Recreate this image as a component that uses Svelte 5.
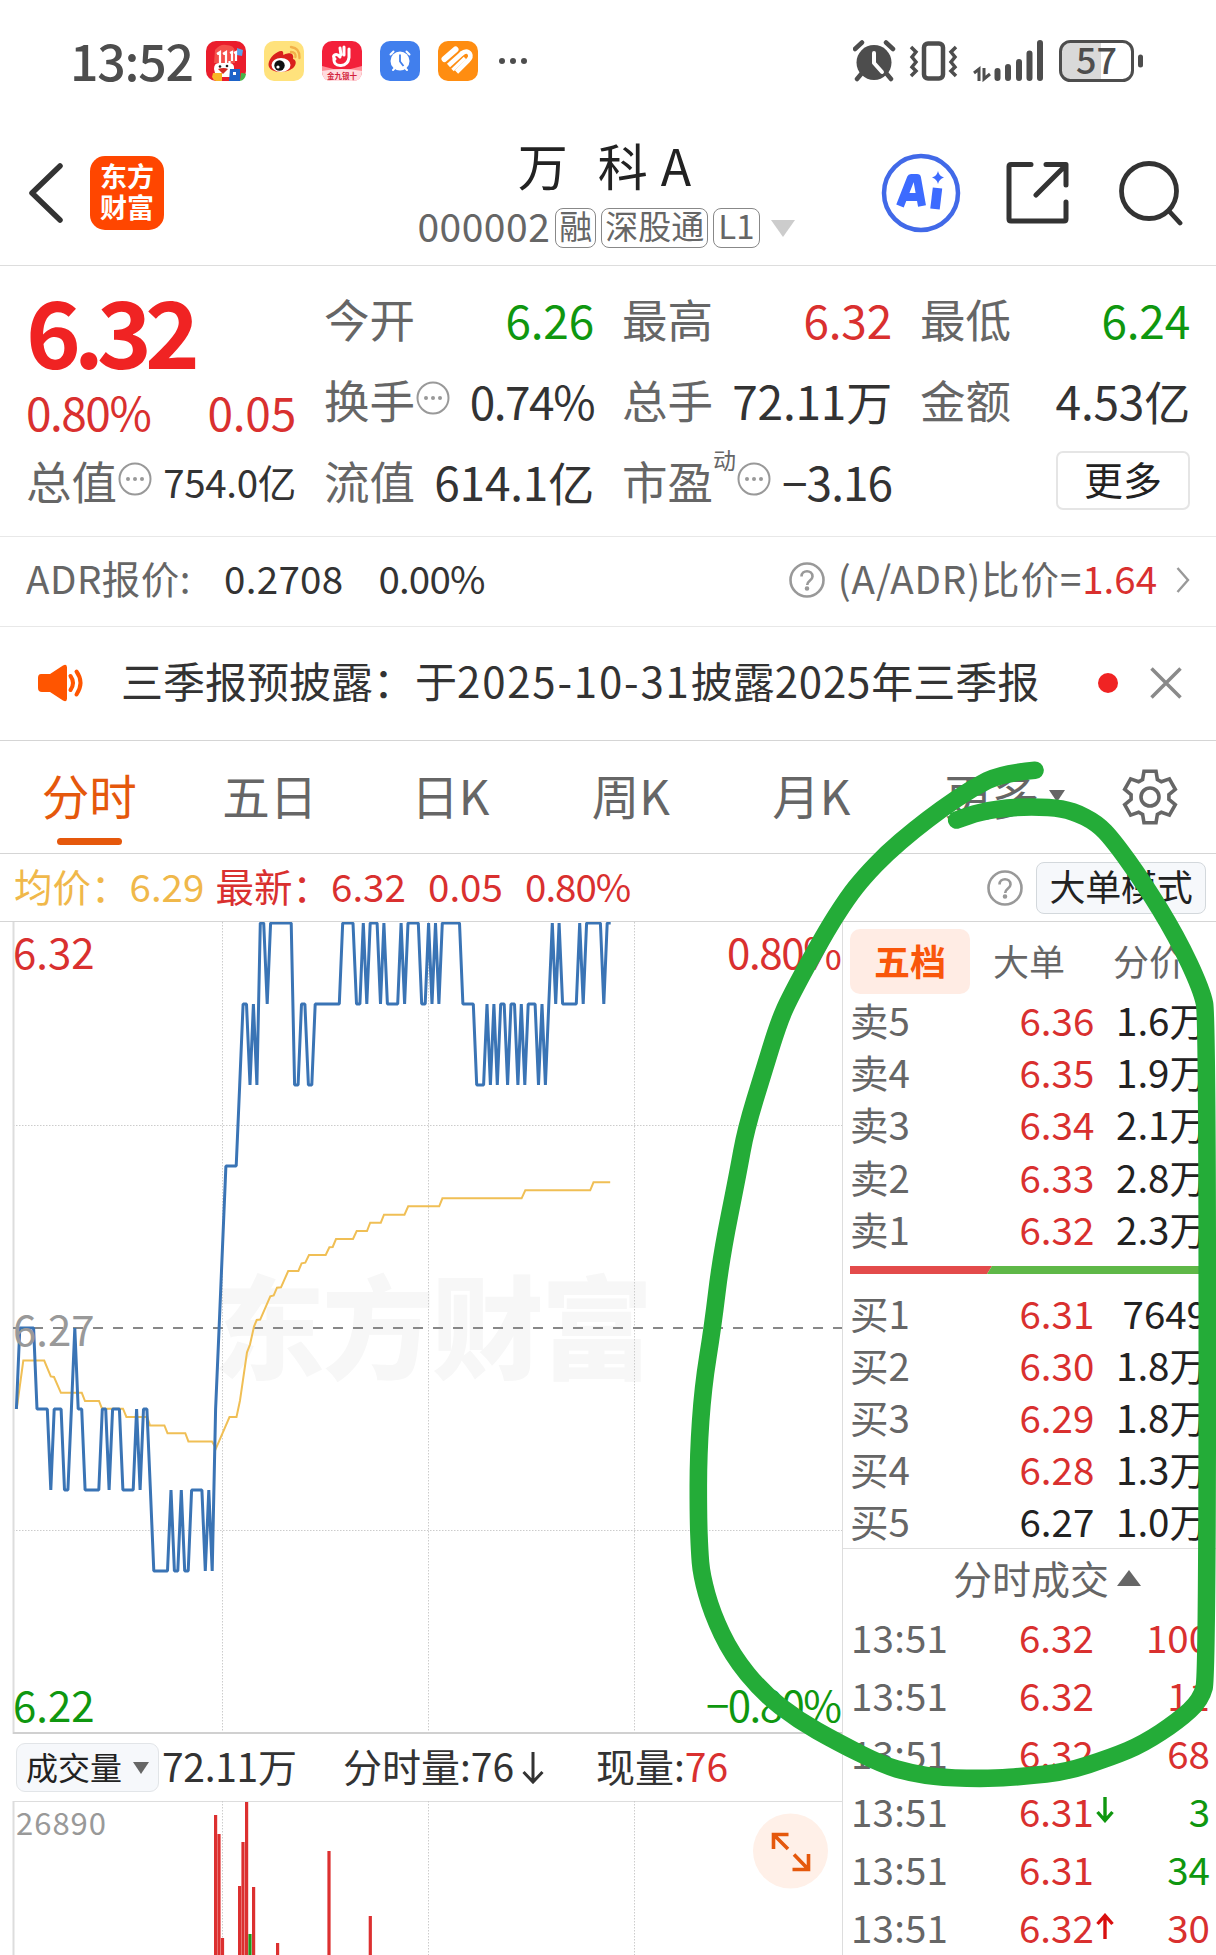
<script>
  const apps = ['sale', 'weibo', 'hand', 'clock', 'health'];
  const tabs = ['分时', '五日', '日K', '周K', '月K', '更多'];

  const sells = [
    ['卖5', '6.36', '1.6万'],
    ['卖4', '6.35', '1.9万'],
    ['卖3', '6.34', '2.1万'],
    ['卖2', '6.33', '2.8万'],
    ['卖1', '6.32', '2.3万']
  ];
  const buys = [
    ['买1', '6.31', '7649'],
    ['买2', '6.30', '1.8万'],
    ['买3', '6.29', '1.8万'],
    ['买4', '6.28', '1.3万'],
    ['买5', '6.27', '1.0万']
  ];
  const trades = [
    { price: '6.32', qty: '100', side: 'red' },
    { price: '6.32', qty: '11', side: 'red' },
    { price: '6.32', qty: '68', side: 'red' },
    { price: '6.31', qty: '3', side: 'green', move: 'down' },
    { price: '6.31', qty: '34', side: 'green' },
    { price: '6.32', qty: '30', side: 'red', move: 'up' }
  ];

  // Minute prices as [cents above 6.00, number of minutes]
  const runs = [
    [26,1],[27,5],[26,4],[25,1],[26,3],[25,2],[26,1],[27,1],[26,2],[25,5],[26,2],[25,1],[26,3],[25,4],
    [26,1],[25,1],[26,2],[25,1],[24,5],[25,1],[24,2],[25,1],[24,2],[25,4],[24,1],[25,1],[24,1],[26,1],[27,1],[28,1],
    [29,4],[30,1],[31,2],[30,1],[31,1],[30,1],[32,2],[31,1],[32,7],[30,2],[31,2],[30,2],[31,8],[32,4],
    [31,2],[32,1],[31,1],[32,3],[31,1],[32,1],[31,4],[32,1],[31,1],[32,4],[31,2],[32,1],[31,1],[32,1],[31,1],
    [32,6],[31,4],[30,3],[31,1],[30,1],[31,1],[30,1],[31,2],[30,1],[31,2],[30,1],[31,1],[30,1],[31,3],[30,1],
    [31,1],[30,1],[31,1],[32,1],[31,1],[32,1],[31,5],[32,1],[31,1],[32,5],[31,1],[32,2]
  ];
  const pricePoints = runs
    .flatMap(([p, n]) => Array(n).fill(p))
    .map((p, i) => `${(16.4 + i * 3.435).toFixed(1)},${1 + (32 - p) * 81}`)
    .join(' ');

  const average =
    '16.7,487 23.3,438.5 44.2,438.5 50.8,454.4 54,455 60.9,470.8 81.8,470.8 85,479 99,479 102,486.7 123,486.7 126.4,495 147.3,495 150,503.5 164.4,503.5 167.5,511.2 185.3,511.2 188.4,519.4 212,519.4 216,526.3 229.5,495 236.5,495 240,478.5 247,430.3 250,422.5 254,404.5 256.7,398 260.2,397.6 270.3,374.4 273.7,373.5 277,365.7 281,365.3 288.2,349 298.4,349 301.6,341.3 305.3,340.7 309,333 325.7,333 329.4,325.3 332.7,325 336,317 353,317 356.7,309 367,309 370.2,300.7 380.8,300.7 384,292.7 404.5,292.7 408.2,284.3 439.2,284.3 442.4,276.3 521.6,276.3 525.3,268.3 590.2,268.3 593.5,260.3 610.2,260.3';

  const bars = [
    [215.6,14],[219,33],[222.5,137],[239.6,85],[243,41],[246.6,1],[250,133,1],[253.6,86],[277.6,142],[329,50],[370.3,115]
  ];

  const stroke = [
    [1035,770.3],[1001.7,773.3],[972.5,788],[941.5,809],[914,830],[887,853],[864,877],[848,897],[825,933],[790,997],
    [778.6,1023],[764,1070],[745.7,1130],[738,1173],[721,1258],[712.7,1327],[703,1387],[698.3,1455],[698.3,1517],
    [699.5,1550],[701.5,1575],[712,1613],[732,1655],[763,1693],[798,1720],[837,1742],[883,1765],[910.5,1773],
    [941.5,1777.7],[992,1778.7],[1027,1776],[1065.5,1772],[1112,1757],[1143,1744],[1178,1721],[1201,1700],[1207.3,1675],
    [1207.3,1017],[1201.7,990],[1176.7,936.7],[1143,881.7],[1113,840],[1096.7,823],[1073,811],[1050,807],[1013,807],
    [980,811.7],[956.7,820]
  ];
  // Quadratic curves through the midpoints of neighbouring samples
  const marker = stroke
    .map(([x, y], i) => {
      if (i === 0) return `M${x} ${y}`;
      if (i === stroke.length - 1) return `L${x} ${y}`;
      const [nx, ny] = stroke[i + 1];
      return `Q${x} ${y} ${(x + nx) / 2} ${(y + ny) / 2}`;
    })
    .join('');

  const polar = (r, deg) => {
    const a = (deg * Math.PI) / 180;
    return `${(30 + r * Math.cos(a)).toFixed(1)},${(30 + r * Math.sin(a)).toFixed(1)}`;
  };
  const gear = [0, 1, 2, 3, 4, 5]
    .map((k) => {
      const c = k * 60 - 90;
      return [polar(19, c - 23), polar(26.5, c - 13), polar(26.5, c + 13), polar(19, c + 23)].join(' ');
    })
    .join(' ');
</script>

{#snippet more()}
  <svg class="dots" viewBox="0 0 34 34"><circle cx="17" cy="17" r="15.5" fill="none" stroke="#999" stroke-width="2" /><g fill="#999"><circle cx="10" cy="17" r="2" /><circle cx="17" cy="17" r="2" /><circle cx="24" cy="17" r="2" /></g></svg>
{/snippet}

{#snippet help()}
  <svg class="help" viewBox="0 0 36 36" fill="none" stroke="#999" stroke-width="2.6"><circle cx="18" cy="18" r="16.5" /><path d="M12.5 14.5c0-7 11-7 11 0 0 4-5.300 4-5.300 8.500" /><circle cx="18" cy="26.500" r="1" fill="#999" /></svg>
{/snippet}

{#snippet level(row)}
  <div class="level">
    <span class="grey">{row[0]}</span>
    <span class:red={row[1] !== '6.27'} class="price">{row[1]}</span>
    <span class="qty">{row[2]}</span>
  </div>
{/snippet}

<div class="screen">
  <div class="status">
    <span class="time">13:52</span>
    <div class="apps">
      {#each apps as app}
        <svg class="app" viewBox="0 0 40 40">
          {#if app === 'sale'}
            <rect width="40" height="40" rx="10" fill="#ea1d2c" />
            <path d="M31 7l6 2-1 6-5-1z" fill="#5ba0e8" />
            <path d="M9 9q5-6 11-5 8 0 9 6v12H8z" fill="#f4504b" />
            <path d="M11 13l3-2v11M17 13l3-2v11M23.500 20v2M24 12l2-1v9M28 12l2-1v9" stroke="#fff" stroke-width="2.200" fill="none" />
            <path d="M8 28q0-6 5-6h11q5 1 4 7l-3 7H10z" fill="#fff" />
            <circle cx="14" cy="25.500" r="1.300" fill="#222" /><circle cx="21" cy="25" r="1.300" fill="#222" />
            <path d="M12 28q6-2 10 0l-5 5z" fill="#d32b24" />
            <path d="M7 32h9v8h-6q-3-1-4-4z" fill="#f8b526" />
            <path d="M24 28h10v12H23z" fill="#1d63c8" /><path d="M27 31h3v3h-3z" fill="#fff" />
            <path d="M35 32q4 0 5 1-1 6-6 7z" fill="#45b649" />
          {:else if app === 'weibo'}
            <rect width="40" height="40" rx="10" fill="#ffe27c" />
            <path d="M4.500 23C5 16 14 9 18 10c2 1 1 4 1 4s7-3 9-1 1 5 1 5c4 1 3 6 1 8-6 7-26 7-25.500-3z" fill="#d9201c" />
            <ellipse cx="17" cy="24" rx="9.500" ry="7" fill="#fff" /><circle cx="15.500" cy="24.500" r="5.200" fill="#111" /><circle cx="14" cy="26" r="1.600" fill="#fff" />
            <path d="M27 6q9 1 8.500 11M27 11q5 0 4.500 5" fill="none" stroke="#f2b04a" stroke-width="2.400" stroke-linecap="round" />
          {:else if app === 'hand'}
            <rect width="40" height="40" rx="10" fill="#f3203a" />
            <path d="M0 25Q20 32 40 25v5q0 10-10 10H10Q0 40 0 30z" fill="#ff8d96" />
            <path d="M0 30Q20 26 40 30q0 10-10 10H10Q0 40 0 30z" fill="#ffdcdf" />
            <path d="M18 16c-4-5-9-1-5 2M12 16q-1 9 7 8.500 7-.5 8-8V8M18 7l1 7M22 6v8" fill="none" stroke="#fff" stroke-width="3" stroke-linecap="round" />
            <text x="20" y="38" font-size="7.500" font-weight="700" text-anchor="middle" fill="#d21f3c">金九银十</text>
          {:else if app === 'clock'}
            <rect width="40" height="40" rx="10" fill="#417fed" />
            <circle cx="20" cy="20" r="9.500" fill="#fff" /><path d="M10.500 13.500l3-3M29.500 13.500l-3-3M13 29l3-3M27 29l-3-3" stroke="#fff" stroke-width="2" stroke-linecap="round" />
            <path d="M20 13.500v7l3.500 4.500" fill="none" stroke="#417fed" stroke-width="1.800" />
          {:else}
            <rect width="40" height="40" rx="10" fill="#ff8d11" />
            <g fill="none" stroke="#fff" stroke-width="4.600"><path d="M6.500 18L17.500 8.500" stroke-width="6" stroke-linecap="round" /><path d="M10.500 24.500L25 11.500" /><path d="M23 13q6-5 9 0 1.500 3-2 6.500L18.500 31" /></g>
            <path d="M14.500 29L27 17" stroke="#fff" stroke-width="3.600" />
          {/if}
        </svg>
      {/each}
    </div>
    <svg class="ellipsis" viewBox="0 0 30 8" fill="#4d4d4d"><circle cx="4" cy="4" r="3" /><circle cx="15" cy="4" r="3" /><circle cx="26" cy="4" r="3" /></svg>
    <svg class="indicators" viewBox="0 0 292 42" fill="none" stroke="#4d4d4d">
      <circle cx="21" cy="22.500" r="17.500" fill="#4d4d4d" stroke="none" />
      <path d="M2 9l7-6.500M40 9l-7-6.500M4 39l5-6M38 39l-5-6" stroke-width="4.500" stroke-linecap="round" />
      <path d="M21 13v10l8 9" stroke="#fff" stroke-width="4" stroke-linecap="round" stroke-linejoin="round" />
      <rect x="71" y="3.500" width="19" height="35" rx="4" stroke-width="4.500" />
      <path d="M58 7l5 5-4 5 4 5-4 5 4 4-5 5M103 7l-5 5 4 5-4 5 4 5-4 4 5 5" stroke-width="3.500" />
      <path d="M121 33l5-4v12M131 28v11l6-5" stroke-width="3" />
      <path d="M144.500 31v7M155 27v11M166 22v16M176.500 13.500v24.500M187 3v35" stroke-width="6" stroke-linecap="round" />
      <path d="M218 3h30v36h-30q-9 0-9-9v-18q0-9 9-9z" fill="#d9d9d9" stroke="none" />
      <rect x="207.500" y="1.500" width="72" height="39" rx="10" stroke-width="3" />
      <rect x="285" y="14.500" width="5" height="13" rx="2.500" fill="#4d4d4d" stroke="none" />
      <text x="243.500" y="34" font-size="36" font-weight="500" text-anchor="middle" fill="#4d4d4d" stroke="none">57</text>
    </svg>
  </div>

  <header>
    <svg class="back" viewBox="0 0 36 62" fill="none" stroke="#333" stroke-width="5.500" stroke-linecap="round" stroke-linejoin="round"><path d="M32 4L4 31l28 27" /></svg>
    <div class="logo"><span>东方</span><span>财富</span></div>
    <div class="title">
      <div class="name"><span>万</span><span>科</span><span>A</span></div>
      <div class="code">
        <span class="digits">000002</span><span class="tag">融</span><span class="tag">深股通</span><span class="tag">L1</span>
        <svg viewBox="0 0 24 17"><path d="M0 0h24L12 17z" fill="#ccc" /></svg>
      </div>
    </div>
    <div class="actions">
      <svg class="ai" viewBox="0 0 80 80"><circle cx="40" cy="40" r="37" fill="none" stroke="#4169e8" stroke-width="4.500" /><g fill="none" stroke="#3d6bff" stroke-linejoin="round"><path d="M19 53L30 25h6l5 28M25 44h14" stroke-width="8" /><path d="M56.500 35L54 56" stroke-width="9.500" /></g><path d="M57 18q1 5 6 6.500-5 1.500-6 6.500-1-5-6-6.500 5-1.500 6-6.500z" fill="#3d6bff" /></svg>
      <svg class="share" viewBox="0 0 64 64" fill="none" stroke="#333" stroke-width="5" stroke-linecap="round" stroke-linejoin="round"><path d="M25 3.500H5q-2 0-2 2V58q0 2 2 2h53q2 0 2-2V41M40 3.500h20V24M59 5L30 34" /></svg>
      <svg class="search" viewBox="0 0 66 66" fill="none" stroke="#333" stroke-width="4.800" stroke-linecap="round"><circle cx="31" cy="31" r="27.500" /><path d="M51 51l11 12" /></svg>
    </div>
  </header>

  <section class="quote">
    <div class="main-price">
      <div class="big">6.32</div>
      <div class="pair red"><span class="pct">0.80%</span><span>0.05</span></div>
      <div class="pair"><span class="key">总值{@render more()}</span><span class="small">754.0亿</span></div>
    </div>
    <div class="stats">
      <div class="pair"><span class="key">今开</span><span class="green">6.26</span></div>
      <div class="pair"><span class="key">换手{@render more()}</span><span class="pct">0.74%</span></div>
      <div class="pair"><span class="key">流值</span><span>614.1亿</span></div>
    </div>
    <div class="stats">
      <div class="pair"><span class="key">最高</span><span class="red">6.32</span></div>
      <div class="pair"><span class="key">总手</span><span>72.11万</span></div>
      <div class="pair"><span class="key">市盈<i class="sup">动</i>{@render more()}</span><span class="neg">−3.16</span></div>
    </div>
    <div class="stats">
      <div class="pair"><span class="key">最低</span><span class="green">6.24</span></div>
      <div class="pair"><span class="key">金额</span><span>4.53亿</span></div>
      <div class="pair end"><button class="more">更多</button></div>
    </div>
  </section>

  <section class="adr">
    <span class="grey label">ADR报价:</span><span class="v1">0.2708</span><span class="v2">0.00%</span>
    <div class="ratio">{@render help()}<span class="grey formula">(A/ADR)比价=</span><span class="red">1.64</span>
      <svg class="chev" viewBox="0 0 14 28" fill="none" stroke="#999" stroke-width="2.400"><path d="M1.500 2L12 14 1.500 26" /></svg></div>
  </section>

  <section class="notice">
    <svg class="speaker" viewBox="0 0 50 40" fill="none" stroke="#ff5500"><path d="M4 11h9L26 2.500q4-2 4 2v31q0 4-4 2L13 29H5q-4 0-4-4V15q0-4 3-4z" fill="#ff5500" stroke="none" /><path d="M33.500 13q5 7 0 14M39.500 8.500q8 11 0 23" stroke-width="4" stroke-linecap="round" /></svg>
    <span class="msg">三季报预披露：于<b class="date">2025-10-31</b>披露<b>2025</b>年三季报</span>
    <i class="dot"></i>
    <svg class="close" viewBox="0 0 32 32" stroke="#8a8a8a" stroke-width="3.500"><path d="M1.500 1.500l29 29M30.500 1.500l-29 29" /></svg>
  </section>

  <nav>
    {#each tabs as tab, i}
      <span class="tab" class:on={i === 0}>{tab}{#if i === 5}<svg class="tri" viewBox="0 0 16 12"><path d="M0 0h16L8 12z" fill="#666" /></svg>{/if}</span>
    {/each}
    <svg class="gear" viewBox="0 0 60 60" fill="none" stroke="#666" stroke-width="3.600"><polygon points={gear} /><circle cx="30" cy="30" r="9" /></svg>
  </nav>

  <section class="info">
    <span class="avg n0">均价：</span><span class="avg n1">6.29</span>
    <span class="red n2">最新：</span><span class="red n3">6.32</span><span class="red n4">0.05</span><span class="red n5">0.80%</span>
    <div class="mode">{@render help()}<button>大单模式</button></div>
  </section>

  <div class="body">
    <div class="charts">
      <svg class="chart" viewBox="0 0 842 812">
        <text x="213" y="449" font-size="112" font-weight="900" fill="#f7f7f7" textLength="440">东方财富</text>
        <g stroke="#ccc" stroke-width="1" stroke-dasharray="1.500 1.500">
          <path d="M222.500 0V811M428.500 0V811M634.500 0V811M13 203.500H842M13 608.500H842" />
        </g>
        <path d="M13.500 0V812" stroke="#ddd" stroke-width="2" />
        <path d="M13 811H842" stroke="#d0d0d0" stroke-width="2" />
        <path d="M13 406H842" stroke="#888" stroke-width="2" stroke-dasharray="10 10" />
        <polyline points={average} fill="none" stroke="#f0bf55" stroke-width="2" />
        <polyline points={pricePoints} fill="none" stroke="#3a74b5" stroke-width="3" stroke-linejoin="bevel" />
        <g font-size="42">
          <text x="13" y="47" fill="#d9302f">6.32</text>
          <text x="13" y="424" fill="#999">6.27</text>
          <text x="13" y="800" fill="#0f970f">6.22</text>
          <text x="842" y="47" fill="#d9302f" text-anchor="end" textLength="115">0.80%</text>
          <text x="842" y="800" fill="#0f970f" text-anchor="end" textLength="136">−0.80%</text>
        </g>
      </svg>
      <div class="vol-head">
        <button>成交量<svg viewBox="0 0 16 12"><path d="M0 0h16L8 12z" fill="#666" /></svg></button>
        <span class="total">72.11万</span><span class="minute">分时量:76<svg viewBox="0 0 22 32" fill="none" stroke="#333" stroke-width="3"><path d="M11 0v30M1.500 20l9.500 10 9.500-10" /></svg></span><span class="now">现量:<em class="red">76</em></span>
      </div>
      <svg class="volume" viewBox="0 0 842 155">
        <path d="M13 .5H842" stroke="#ddd" /><path d="M13.500 0V155" stroke="#ddd" stroke-width="2" />
        <path d="M222.500 0V155M428.500 0V155M634.500 0V155" stroke="#ccc" stroke-dasharray="1.500 1.500" />
        {#each bars as bar}
          <rect x={bar[0] - 1.6} y={bar[1]} width="3.200" height={155 - bar[1]} fill={bar[2] ? '#1f9a1f' : '#dc3030'} />
        {/each}
        <text x="16" y="34" font-size="31" fill="#999" textLength="90">26890</text>
        <circle cx="790.500" cy="50" r="37.500" fill="#fff0e8" />
        <path d="M773.500 48V33.500h15M774 34l14 14M808.500 53v15.500h-16M808 68L794 53.500" fill="none" stroke="#e5580c" stroke-width="3.600" />
      </svg>
    </div>

    <aside>
      <div class="book-tabs"><span class="on">五档</span><span>大单</span><span>分价</span></div>
      <div class="levels">{#each sells as row}{@render level(row)}{/each}</div>
      <svg class="balance" viewBox="0 0 350 8"><path d="M0 0h142l-5 8H0z" fill="#e34b4b" /><path d="M142 0h208v8H137z" fill="#5fb848" /></svg>
      <div class="levels">{#each buys as row}{@render level(row)}{/each}</div>
      <div class="trade-head">分时成交<svg viewBox="0 0 24 16"><path d="M0 16h24L12 0z" fill="#666" /></svg></div>
      {#each trades as t}
        <div class="trade">
          <span class="grey">13:51</span>
          <span class="price red">{t.price}</span>
          <span class="arrow">
            {#if t.move}
              <svg class:flip={t.move === 'up'} viewBox="0 0 18 26" fill="none" stroke={t.move === 'up' ? '#d90f0f' : '#0f970f'} stroke-width="3.400"><path d="M9 0v23M1.500 15L9 23.500 16.500 15" /></svg>
            {/if}
          </span>
          <span class="qty {t.side}">{t.qty}</span>
        </div>
      {/each}
    </aside>
  </div>

  <svg class="marker" viewBox="0 0 1216 1955"><path d={marker} fill="none" stroke="#24ac38" stroke-width="17.600" stroke-linecap="round" stroke-linejoin="round" /></svg>
</div>

<style>
  :global(body) { margin: 0; background: #fff; }
  .screen {
    position: relative; width: 1216px; height: 1955px; overflow: hidden; background: #fff; color: #333;
    font-family: "Noto Sans CJK SC", sans-serif; font-size: 46px; line-height: 1; white-space: nowrap;
  }
  .screen * { box-sizing: border-box; }
  svg { display: block; flex: none; }
  button { font: inherit; line-height: 1; color: #222; padding: 0; background: #fff; display: flex; align-items: center; justify-content: center; }
  i, em { font-style: normal; }
  .red { color: #d9302f; }
  .green { color: #0f970f; }
  .grey { color: #666; }

  .status { height: 106px; padding: 16px 71px 0 70px; display: flex; align-items: center; color: #4d4d4d; }
  .time { font-size: 50px; font-weight: 500; width: 136px; padding-bottom: 5px; letter-spacing: -1.200px; }
  .apps { display: flex; gap: 18px; }
  .app { width: 40px; height: 40px; }
  .ellipsis { width: 30px; height: 8px; margin-left: 20px; }
  .indicators { width: 292px; height: 42px; margin-left: auto; }

  header { height: 160px; border-bottom: 1.500px solid #ddd; display: flex; align-items: center; padding: 14px 32px 0 28px; }
  .back { width: 36px; height: 62px; }
  .logo { width: 74px; height: 74px; margin-left: 26px; border-radius: 15px; background: #ff4600; color: #fff; display: flex; flex-direction: column; align-items: center; justify-content: center; font-size: 27px; font-weight: 700; line-height: 31px; padding-bottom: 4px; }
  .title { width: 400px; margin-left: 242px; margin-top: 6px; display: flex; flex-direction: column; align-items: center; }
  .name { display: flex; font-size: 50px; color: #222; height: 65px; align-items: center; margin-left: -3px; }
  .name span:nth-child(2) { margin-left: 30px; margin-right: 13px; }
  .code { display: flex; align-items: center; height: 64px; font-size: 39px; color: #666; gap: 5px; }
  .digits { padding-bottom: 5px; letter-spacing: .5px; }
  .tag { border: 1.500px solid #888; border-radius: 8px; height: 40px; font-size: 33px; padding: 0 3px; line-height: 33px; }
  .tag:nth-child(4) { padding: 0 4px; }
  .code svg { width: 24px; height: 17px; margin-left: 6px; }
  .actions { margin-left: auto; display: flex; align-items: center; }
  .ai { width: 80px; height: 80px; }
  .share { width: 64px; height: 64px; margin-left: 45px; }
  .search { width: 66px; height: 66px; margin-left: 48px; }

  .quote { height: 271px; border-bottom: 1.500px solid #e8e8e8; padding: 15px 26px 0; display: grid; grid-template-columns: repeat(4, 270px); gap: 28px; }
  .pair { height: 81px; display: flex; align-items: center; justify-content: space-between; padding-bottom: 5px; letter-spacing: -.2px; }
  .pct { letter-spacing: -1.500px; }
  .neg { letter-spacing: -1px; }
  .key { color: #666; display: flex; align-items: center; letter-spacing: 0; font-size: 45.500px; }
  .dots { width: 34px; height: 34px; margin-left: 1px; margin-top: -4px; }
  .big { height: 94px; font-size: 93px; font-weight: 700; color: #f02323; letter-spacing: -7px; display: flex; align-items: center; }
  .main-price .pair:nth-child(2) { height: 68px; padding-bottom: 0; position: relative; top: 2px; }
  .small { font-size: 38.500px; letter-spacing: -.3px; }
  .sup { font-size: 23px; align-self: flex-start; margin-top: -10px; }
  .end { justify-content: flex-end; padding: 0; }
  .more { width: 134px; height: 59px; border: 2px solid #e5e5e5; border-radius: 7px; font-size: 39px; padding-bottom: 5px; margin-bottom: 6px; }

  .adr { height: 90px; border-bottom: 1.500px solid #e8e8e8; padding: 0 26px 8px; display: flex; align-items: center; font-size: 38.500px; }
  .label { letter-spacing: .5px; }
  .v1 { margin-left: 33px; letter-spacing: .3px; }
  .v2 { margin-left: 35px; letter-spacing: -.8px; }
  .ratio { margin-left: auto; display: flex; align-items: center; }
  .formula { letter-spacing: .9px; }
  .help { width: 36px; height: 36px; margin-right: 13px; margin-top: 5px; }
  .chev { width: 14px; height: 28px; margin-left: 19px; margin-top: 5px; }

  .notice { height: 114px; border-bottom: 1.500px solid #d5d5d5; display: flex; align-items: center; padding: 0 34px 1px 37px; }
  .speaker { width: 50px; height: 40px; }
  .msg { font-size: 42px; margin-left: 34px; padding-bottom: 6px; }
  .msg b { font-weight: 400; letter-spacing: .8px; }
  .msg .date { letter-spacing: 1.800px; }
  .dot { width: 20px; height: 20px; border-radius: 50%; background: #f02323; margin-left: auto; }
  .close { width: 32px; height: 32px; margin-left: 32px; }

  nav { height: 113px; border-bottom: 1.500px solid #d5d5d5; display: flex; align-items: center; font-size: 47.500px; color: #666; }
  .tab { width: 180.500px; height: 112px; display: flex; align-items: center; justify-content: center; padding-bottom: 5px; padding-right: 2px; }
  .tab:last-of-type { padding-left: 26px; }
  .tab.on { color: #e5580c; position: relative; }
  .tab.on::after { content: ''; position: absolute; left: 57px; bottom: 8px; width: 65px; height: 7px; border-radius: 4px; background: #e5580c; }
  .tri { width: 16px; height: 12px; margin: 2px 0 0 10px; }
  .gear { width: 60px; height: 60px; margin-left: 37px; }

  .info { height: 68px; border-bottom: 1.500px solid #d5d5d5; display: flex; align-items: center; padding: 0 10px 4px 14px; font-size: 38.500px; }
  .avg { color: #f0b84a; }
  .n1 { width: 86px; }
  .n3, .n4 { width: 97px; }
  .n5 { letter-spacing: -1px; }
  .mode { margin-left: auto; display: flex; align-items: center; }
  .mode button { width: 170px; height: 52px; border: 1.500px solid #d3d8dc; border-radius: 8px; background: #f6f8fb; font-size: 36px; padding-bottom: 5px; margin-top: 4px; letter-spacing: -.3px; }

  .body { display: flex; }
  .charts { width: 842px; }
  .chart { width: 842px; height: 812px; }
  .vol-head { height: 67px; display: flex; align-items: center; padding-left: 16px; font-size: 39px; }
  .vol-head button { width: 143px; height: 49px; border: 1.500px solid #e2e5e8; border-radius: 9px; background: #f6f8fb; font-size: 32px; padding-bottom: 4px; }
  .vol-head button svg { width: 16px; height: 12px; margin: 4px 0 0 11px; }
  .vol-head span { padding-bottom: 4px; }
  .total { width: 180px; padding-left: 3px; letter-spacing: -.3px; }
  .minute { width: 257px; padding-left: 4px; display: flex; align-items: center; }
  .minute svg { width: 22px; height: 32px; margin: 4px 0 0 8px; }
  .volume { width: 842px; height: 155px; }

  aside { width: 374px; height: 1034px; border-left: 1.500px solid #ddd; padding-left: 7px; }
  .book-tabs { display: flex; align-items: center; height: 74px; padding-top: 5px; font-size: 36px; color: #666; }
  .book-tabs span { width: 120px; height: 65px; display: flex; align-items: center; justify-content: center; padding-bottom: 4px; }
  .book-tabs span:nth-child(2) { margin-left: -1px; }
  .book-tabs .on { background: #ffece4; color: #f9560a; font-weight: 700; border-radius: 10px; }
  .levels { font-size: 38.500px; color: #222; }
  .level { height: 52.100px; display: flex; align-items: center; padding: 0 8px 5px 0; }
  .level .grey { width: 169.500px; }
  .price { width: 75px; }
  .qty { margin-left: auto; }
  .balance { width: 350px; height: 8px; margin: 10px 0 14px; }
  .trade-head { height: 62px; margin-left: -7px; margin-top: -1px; border-top: 1.500px solid #e0e0e0; padding: 0 0 4px 110px; display: flex; align-items: center; color: #666; font-size: 39px; }
  .trade-head svg { width: 24px; height: 16px; margin: 1px 0 0 8px; }
  .trade { height: 58.100px; display: flex; align-items: center; padding: 0 6px 6px 1px; font-size: 38.500px; }
  .trade .grey { width: 168px; letter-spacing: .2px; }
  .arrow { width: 18px; margin-left: 2px; }
  .arrow svg { width: 18px; height: 26px; }
  .flip { transform: rotate(180deg); }
  .marker { position: absolute; inset: 0; width: 1216px; height: 1955px; pointer-events: none; }
</style>
